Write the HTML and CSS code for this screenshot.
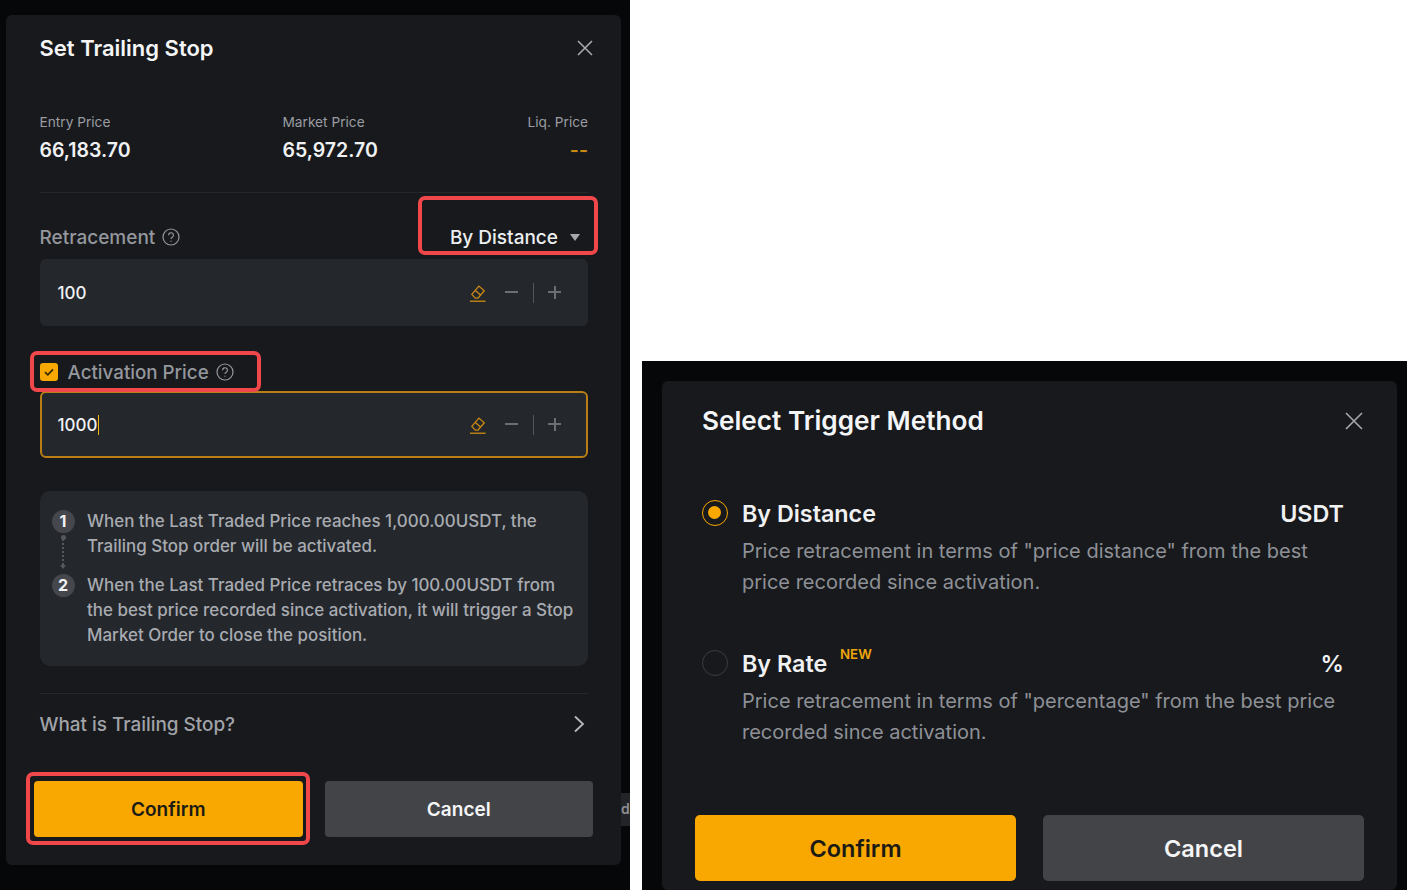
FILE: index.html
```html
<!DOCTYPE html>
<html lang="en">
<head>
    <meta charset="UTF-8">
    <meta name="viewport" content="width=device-width, initial-scale=1.0">
    <title>Trailing Stop</title>
    <link rel="stylesheet" href="styles.css">
</head>
<body>
    <div class="page">
        <!-- left shot: trailing stop dialog -->
        <section class="shot shot-left">
            <span class="chart-chip">d</span>
            <div class="modal modal-stop">
                <div class="stop-head">
                    <h2 class="stop-title">Set Trailing Stop</h2>
                    <svg class="close-icon" width="18" height="18" viewBox="0 0 18 18"><path d="M2 2l14 14M16 2L2 16"/></svg>
                </div>
                <div class="stats">
                    <div class="stat">
                        <div class="stat-label">Entry Price</div>
                        <div class="stat-value">66,183.70</div>
                    </div>
                    <div class="stat stat-market">
                        <div class="stat-label">Market Price</div>
                        <div class="stat-value">65,972.70</div>
                    </div>
                    <div class="stat stat-liq">
                        <div class="stat-label">Liq. Price</div>
                        <div class="stat-value stat-empty">--</div>
                    </div>
                </div>
                <div class="divider"></div>

                <div class="field-row field-retrace">
                    <span class="field-label">Retracement</span>
                    <svg class="help-icon" width="18" height="18" viewBox="0 0 18 18"><circle cx="9" cy="9" r="8"/><path d="M6.6 7.2a2.4 2.4 0 1 1 3.7 2c-.9.5-1.3 1-1.3 1.9"/><path d="M9 12.8v1"/></svg>
                    <span class="method">By Distance</span>
                    <span class="caret"></span>
                    <span class="mark mark-method"></span>
                </div>
                <div class="input-box">
                    <span class="input-value">100</span>
                    <svg class="eraser" width="20" height="20" viewBox="0 0 18 18"><path d="M3.4 10.2l6.4-7.4 4.8 4.2-5.6 6.6H6.6z"/><path d="M6.4 6.6l4.9 4.2"/><path d="M1.8 16.4h14"/></svg>
                    <span class="step-btn step-minus"></span>
                    <span class="step-sep"></span>
                    <span class="step-btn step-plus"></span>
                </div>

                <div class="field-row field-activation">
                    <span class="checkbox">
                        <svg width="12" height="12" viewBox="0 0 12 12"><path d="M2 6.2l2.8 2.6L10 3.4"/></svg>
                    </span>
                    <span class="field-label">Activation Price</span>
                    <svg class="help-icon" width="18" height="18" viewBox="0 0 18 18"><circle cx="9" cy="9" r="8"/><path d="M6.6 7.2a2.4 2.4 0 1 1 3.7 2c-.9.5-1.3 1-1.3 1.9"/><path d="M9 12.8v1"/></svg>
                    <span class="mark mark-activation"></span>
                </div>
                <div class="input-box input-focus">
                    <span class="input-value">1000</span><span class="cursor"></span>
                    <svg class="eraser" width="20" height="20" viewBox="0 0 18 18"><path d="M3.4 10.2l6.4-7.4 4.8 4.2-5.6 6.6H6.6z"/><path d="M6.4 6.6l4.9 4.2"/><path d="M1.8 16.4h14"/></svg>
                    <span class="step-btn step-minus"></span>
                    <span class="step-sep"></span>
                    <span class="step-btn step-plus"></span>
                </div>

                <div class="info-box">
                    <div class="info-step info-first">
                        <div class="step-rail">
                            <span class="step-num">1</span>
                            <span class="step-line"></span>
                        </div>
                        <p>When the Last Traded Price reaches 1,000.00USDT, the Trailing Stop order will be activated.</p>
                    </div>
                    <div class="info-step">
                        <div class="step-rail">
                            <span class="step-num">2</span>
                        </div>
                        <p>When the Last Traded Price retraces by 100.00USDT from the best price recorded since activation, it will trigger a Stop Market Order to close the position.</p>
                    </div>
                </div>

                <div class="divider divider-help"></div>
                <div class="help-row">
                    <span>What is Trailing Stop?</span>
                    <svg class="chevron" width="12" height="20" viewBox="0 0 12 20"><path d="M2 2.5l8 7.5-8 7.5"/></svg>
                </div>
                <div class="stop-actions">
                    <button class="btn btn-confirm">Confirm<span class="mark mark-confirm"></span></button>
                    <button class="btn btn-cancel">Cancel</button>
                </div>
            </div>
        </section>

        <!-- right shot: trigger method dialog -->
        <section class="shot shot-right">
            <div class="modal modal-method">
                <div class="method-head">
                    <h2 class="method-title">Select Trigger Method</h2>
                    <svg class="close-icon" width="20" height="20" viewBox="0 0 20 20"><path d="M2 2l16 16M18 2L2 18"/></svg>
                </div>
                <div class="option option-distance">
                    <span class="radio radio-on"></span>
                    <div class="option-body">
                        <div class="option-top">
                            <span class="option-name">By Distance</span>
                            <span class="option-unit">USDT</span>
                        </div>
                        <p>Price retracement in terms of "price distance" from the best price recorded since activation.</p>
                    </div>
                </div>
                <div class="option option-rate">
                    <span class="radio"></span>
                    <div class="option-body">
                        <div class="option-top">
                            <span class="option-name">By Rate</span>
                            <span class="new-tag">NEW</span>
                            <span class="option-unit">%</span>
                        </div>
                        <p>Price retracement in terms of "percentage" from the best price recorded since activation.</p>
                    </div>
                </div>
                <div class="method-actions">
                    <button class="btn btn-confirm">Confirm</button>
                    <button class="btn btn-cancel">Cancel</button>
                </div>
            </div>
        </section>
    </div>
</body>
</html>
```

FILE: styles.css
```css
* {
    box-sizing: border-box;
}
html, body {
    margin: 0;
    height: 890px;
    overflow: hidden;
    background: #fff;
}
body {
    font-family: Inter, "Liberation Sans", sans-serif;
    color: #eaecef;
}
h2, p {
    margin: 0;
}
.page {
    display: flex;
    width: 1408px;
    height: 890px;
}
.shot {
    position: relative;
    background: #060708;
    overflow: hidden;
}
.shot-left {
    width: 630px;
    height: 890px;
    padding: 15px 9px 0 6px;
}
.shot-right {
    width: 765px;
    height: 529px;
    margin: 361px 0 0 12px;
    padding: 20px 10px 0 20px;
}
.chart-chip {
    position: absolute;
    left: 621px;
    top: 793px;
    width: 9px;
    height: 33px;
    background: #232427;
    color: #8d8f93;
    font-size: 14px;
    font-weight: 600;
    line-height: 31px;
}
.modal {
    background: #18191c;
    border-radius: 6px;
}

/* left dialog */
.modal-stop {
    height: 850px;
    padding: 0 33px 0 33.5px;
}
.stop-head {
    height: 66px;
    display: flex;
    align-items: center;
    justify-content: space-between;
}
.stop-title {
    font-size: 22px;
    font-weight: 600;
    color: #f4f5f6;
}
.close-icon {
    fill: none;
    stroke: #a5a8ad;
    stroke-width: 1.6;
    margin-right: -6px;
}
.stats {
    display: flex;
    margin-top: 32px;
    height: 78.5px;
}
.stat {
    width: 243px;
}
.stat-market {
    width: 215px;
}
.stat-liq {
    flex: 1;
    text-align: right;
}
.stat-label {
    font-size: 13.7px;
    line-height: 18px;
    color: #9a9da3;
}
.stat-value {
    font-size: 19.5px;
    font-weight: 600;
    line-height: 28px;
    margin-top: 5px;
    color: #f0f1f3;
}
.stat-empty {
    color: #c98a12;
}
.divider {
    height: 1px;
    background: #25272b;
}
.field-row {
    position: relative;
    display: flex;
    align-items: center;
}
.field-retrace {
    height: 66.5px;
    padding-top: 23px;
}
.field-label {
    font-size: 19px;
    font-weight: 500;
    color: #94979d;
}
.field-activation .field-label {
    font-size: 18.75px;
}
.help-icon {
    margin-left: 7px;
    fill: none;
    stroke: #94979d;
    stroke-width: 1.2;
}
.method {
    margin-left: auto;
    font-size: 19px;
    font-weight: 500;
    color: #eceef0;
    margin-right: 12px;
}
.caret {
    width: 0;
    height: 0;
    border-left: 5px solid transparent;
    border-right: 5px solid transparent;
    border-top: 7px solid #a5a8ad;
    margin-right: 8px;
}
.input-box {
    display: flex;
    align-items: center;
    height: 67px;
    padding: 0 27px 0 18px;
    background: #24272c;
    border-radius: 6px;
}
.input-focus {
    border: 2px solid #b97f14;
    padding: 0 25px 0 16px;
}
.input-value {
    font-size: 17px;
    font-weight: 500;
    color: #f0f1f3;
}
.cursor {
    width: 1px;
    height: 20px;
    margin-left: 1px;
    background: #f0b90b;
}
.eraser {
    margin-left: auto;
    fill: none;
    stroke: #c98a12;
    stroke-width: 1.2;
}
.step-btn {
    position: relative;
    width: 13px;
    height: 13px;
    margin-left: 17px;
}
.step-btn::before {
    content: "";
    position: absolute;
    left: 0;
    right: 0;
    top: 5px;
    height: 2px;
    background: #6b6e74;
}
.step-plus {
    margin-left: 14px;
}
.step-plus::after {
    content: "";
    position: absolute;
    top: 0;
    bottom: 0;
    left: 5.5px;
    width: 2px;
    background: #6b6e74;
}
.step-sep {
    width: 1px;
    height: 20px;
    margin-left: 15px;
    background: #52555a;
}
.field-activation {
    height: 65px;
    padding-top: 27px;
}
.checkbox {
    display: flex;
    align-items: center;
    justify-content: center;
    width: 18px;
    height: 18px;
    margin-right: 10px;
    background: #f8a800;
    border-radius: 3px;
}
.checkbox svg {
    fill: none;
    stroke: #3a2b05;
    stroke-width: 1.8;
}
.info-box {
    height: 175px;
    margin-top: 33px;
    padding: 19px 8px 0 12px;
    background: #24272c;
    border-radius: 10px;
}
.info-step {
    display: flex;
    gap: 12.5px;
}
.info-first {
    height: 64px;
}
.info-step p {
    font-size: 16.95px;
    font-weight: 500;
    line-height: 25px;
    color: #a8abb0;
    margin-top: -1px;
}
.step-rail {
    width: 23px;
    flex: none;
    display: flex;
    flex-direction: column;
    align-items: center;
}
.step-num {
    width: 23px;
    height: 23px;
    border-radius: 50%;
    background: #45474c;
    color: #f0f1f3;
    font-size: 16px;
    font-weight: 700;
    line-height: 22px;
    text-align: center;
    flex: none;
}
.step-line {
    position: relative;
    height: 32px;
    margin-top: 3px;
    border-left: 2px dotted #55585d;
}
.step-line::before {
    content: "";
    position: absolute;
    left: -3.5px;
    top: -1px;
    width: 5px;
    height: 5px;
    border-radius: 50%;
    background: #55585d;
}
.step-line::after {
    content: "";
    position: absolute;
    left: -4px;
    bottom: -1px;
    border-left: 3px solid transparent;
    border-right: 3px solid transparent;
    border-top: 4px solid #55585d;
}
.divider-help {
    margin-top: 27px;
}
.help-row {
    height: 60px;
    display: flex;
    align-items: center;
    justify-content: space-between;
    font-size: 18.9px;
    font-weight: 500;
    color: #a0a3a8;
}
.chevron {
    fill: none;
    stroke: #b6b9bd;
    stroke-width: 1.8;
    margin-right: 3px;
}
.stop-actions {
    display: flex;
    gap: 22px;
    margin: 27px -5px 0 -5.5px;
}
.btn {
    position: relative;
    flex: 1;
    height: 56px;
    border: none;
    border-radius: 4px;
    font-family: inherit;
    font-size: 19px;
    font-weight: 600;
}
.btn-confirm {
    background: #f8a800;
    color: #1c1a14;
}
.btn-cancel {
    background: #434448;
    color: #f4f5f6;
}

/* red annotation frames */
.mark {
    position: absolute;
    border: 4px solid #f0474a;
    border-radius: 7px;
    pointer-events: none;
}
.mark-method {
    left: 378.5px;
    right: -10px;
    top: 3px;
    height: 59px;
}
.mark-activation {
    left: -9.5px;
    top: 25px;
    width: 231px;
    height: 41px;
}
.mark-confirm {
    left: -8px;
    right: -7px;
    top: -9px;
    bottom: -8px;
}

/* right dialog */
.modal-method {
    height: 509px;
    padding: 0 33px 0 40px;
}
.method-head {
    height: 79px;
    display: flex;
    align-items: center;
    justify-content: space-between;
}
.method-title {
    font-size: 26.2px;
    font-weight: 600;
    color: #f4f5f6;
}
.method-head .close-icon {
    margin-right: 0;
}
.option {
    display: flex;
    gap: 14px;
    padding-right: 20px;
}
.option-distance {
    margin-top: 37px;
    height: 150px;
}
.option-rate {
    height: 168px;
}
.radio {
    flex: none;
    width: 26px;
    height: 26px;
    margin-top: 3px;
    border: 1.5px solid #3a3c40;
    border-radius: 50%;
}
.radio-on {
    position: relative;
    border-color: #f8a800;
}
.radio-on::after {
    content: "";
    position: absolute;
    left: 5px;
    top: 5px;
    width: 13px;
    height: 13px;
    border-radius: 50%;
    background: #f8a800;
}
.option-body {
    flex: 1;
}
.option-top {
    position: relative;
    display: flex;
    align-items: center;
    height: 32px;
    font-size: 23.3px;
    font-weight: 600;
    color: #f0f1f3;
}
.option-unit {
    margin-left: auto;
}
.new-tag {
    position: absolute;
    left: 98px;
    top: -1px;
    font-size: 13.3px;
    font-weight: 600;
    color: #f0a50a;
}
.option-body p {
    margin-top: 7px;
    font-size: 20px;
    line-height: 30.5px;
    color: #8e9197;
}
.method-actions {
    display: flex;
    gap: 27px;
    margin: 0 0 0 -7px;
}
.method-actions .btn {
    height: 66px;
    font-size: 23.5px;
    border-radius: 5px;
}
```
